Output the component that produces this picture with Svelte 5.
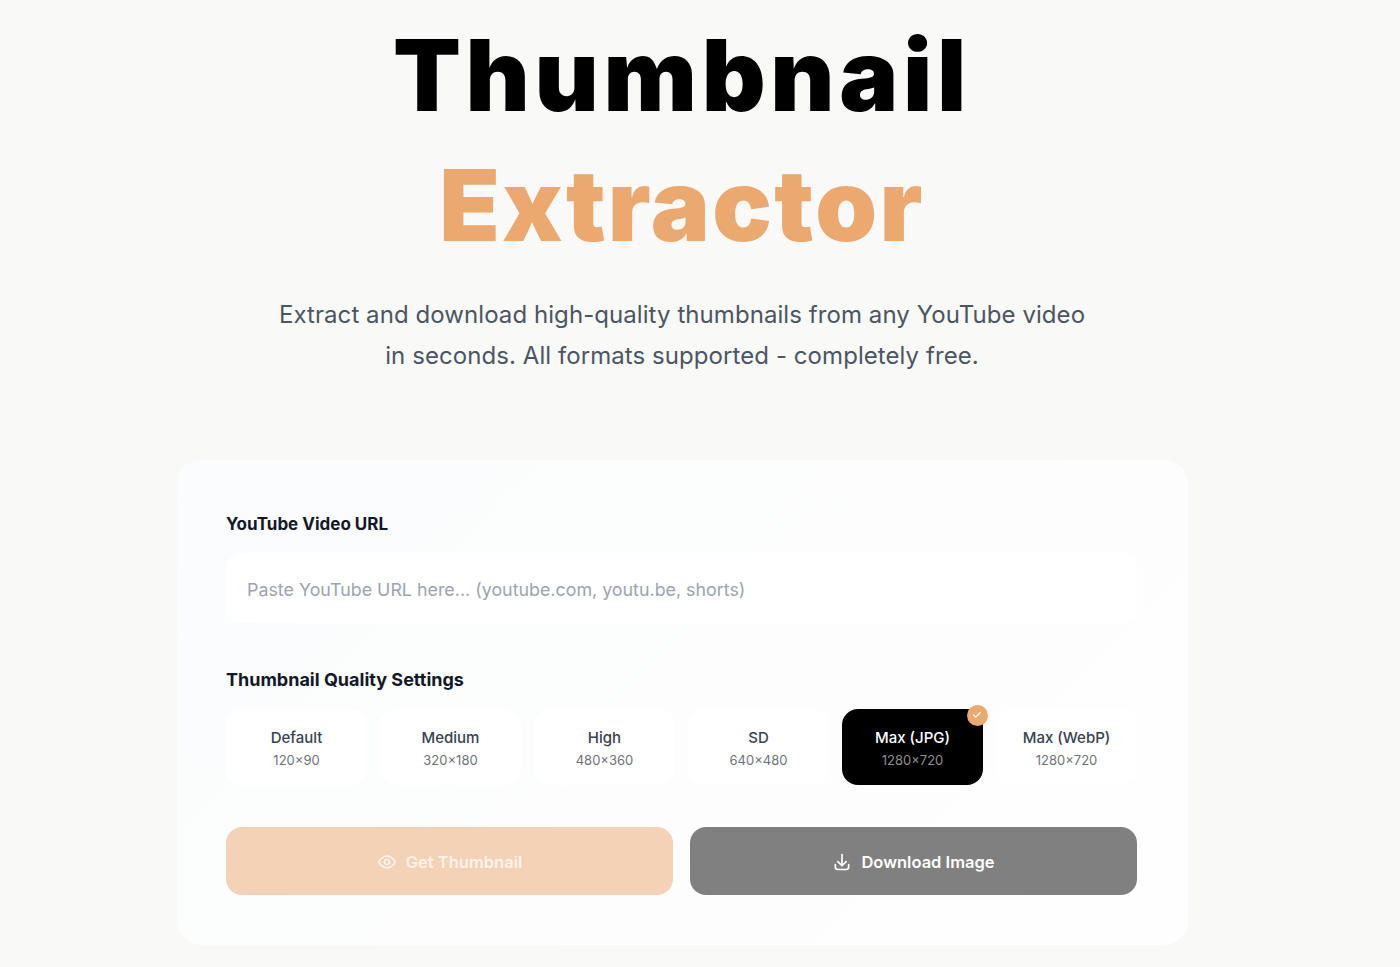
<script>
  const qualities = [
    { name: 'Default', size: '120×90' },
    { name: 'Medium', size: '320×180' },
    { name: 'High', size: '480×360' },
    { name: 'SD', size: '640×480' },
    { name: 'Max (JPG)', size: '1280×720', active: true },
    { name: 'Max (WebP)', size: '1280×720' }
  ];
</script>

<main class="page">
  <header class="hero">
    <h1>Thumbnail <span>Extractor</span></h1>
    <p>Extract and download high-quality thumbnails from any YouTube video<br />in seconds. All formats supported - completely free.</p>
  </header>

  <section class="card">
    <label class="label" for="url">YouTube Video URL</label>
    <input id="url" class="url" type="text" placeholder="Paste YouTube URL here... (youtube.com, youtu.be, shorts)" />

    <div class="label quality-label">Thumbnail Quality Settings</div>
    <div class="qualities">
      {#each qualities as q}
        <button class="quality" class:active={q.active}>
          <span class="name">{q.name}</span>
          <span class="size">{q.size}</span>
          {#if q.active}
            <span class="check">
              <svg width="10" height="10" viewBox="0 0 24 24" fill="none" stroke="currentColor" stroke-width="3" stroke-linecap="round" stroke-linejoin="round"><path d="M20 6L9 17l-5-5" /></svg>
            </span>
          {/if}
        </button>
      {/each}
    </div>

    <div class="actions">
      <button class="action get">
        <svg width="20" height="20" viewBox="0 0 24 24" fill="none" stroke="currentColor" stroke-width="2" stroke-linecap="round" stroke-linejoin="round"><path d="M2 12s3.6-7 10-7 10 7 10 7-3.6 7-10 7-10-7-10-7z" /><circle cx="12" cy="12" r="3" /></svg>
        Get Thumbnail
      </button>
      <button class="action download">
        <svg width="20" height="20" viewBox="0 0 24 24" fill="none" stroke="currentColor" stroke-width="2" stroke-linecap="round" stroke-linejoin="round"><path d="M4 15v3a3 3 0 0 0 3 3h10a3 3 0 0 0 3-3v-3" /><path d="M12 3v13" /><path d="M7 11.5l5 5 5-5" /></svg>
        Download Image
      </button>
    </div>
  </section>
</main>

<style>
  :global(body) {
    margin: 0;
    background: #f9f9f7;
    font-family: Inter, "Liberation Sans", sans-serif;
  }

  .page {
    width: 1365px;
    height: 967px;
    overflow: hidden;
  }

  .hero {
    padding-right: 1px;
    text-align: center;
  }

  h1 {
    margin: 0;
    padding-top: 10px;
    font-size: 99px;
    font-weight: 900;
    line-height: 130px;
    letter-spacing: 4.7px;
    color: #000;
  }

  h1 span {
    display: block;
    letter-spacing: 2.4px;
    color: #eba96f;
  }

  .hero p {
    margin: 24px 0 0;
    font-size: 24px;
    line-height: 41px;
    letter-spacing: 0.07px;
    color: #4b5563;
  }

  .card {
    box-sizing: border-box;
    width: 1011px;
    margin: 84px auto 0;
    padding: 50px 51px 50px 49px;
    border-radius: 24px;
    background: linear-gradient(135deg, #fbfcfd, #fefefe);
  }

  .label {
    display: block;
    font-size: 17px;
    font-weight: 700;
    line-height: 28px;
    color: #111827;
  }

  .url {
    display: block;
    box-sizing: border-box;
    width: 100%;
    height: 70px;
    margin-top: 15px;
    padding: 2px 21px 0;
    border: none;
    border-radius: 16px;
    background: #fff;
    font-family: inherit;
    font-size: 17.85px;
  }

  .url::placeholder {
    color: #9ca3af;
  }

  .quality-label {
    margin-top: 43px;
    font-size: 18px;
  }

  .qualities {
    display: grid;
    grid-template-columns: repeat(6, 1fr);
    gap: 13px;
    margin-top: 15px;
  }

  .quality {
    position: relative;
    display: flex;
    flex-direction: column;
    align-items: center;
    gap: 3px;
    height: 76px;
    padding: 19px 0 0;
    border: none;
    border-radius: 16px;
    background: #fff;
    font-family: inherit;
    color: #374151;
  }

  .name {
    font-size: 15px;
    font-weight: 500;
    line-height: 20px;
  }

  .size {
    font-size: 13px;
    line-height: 18px;
    color: #6f7279;
  }

  .quality.active {
    background: #000;
    color: #fff;
  }

  .quality.active .size {
    color: #8f8f8f;
  }

  .check {
    position: absolute;
    top: -4.5px;
    right: -4.5px;
    display: flex;
    align-items: center;
    justify-content: center;
    width: 21px;
    height: 21px;
    border-radius: 50%;
    background: #eba96f;
    color: #fff;
  }

  .actions {
    display: grid;
    grid-template-columns: 1fr 1fr;
    gap: 17px;
    margin-top: 42px;
  }

  .action {
    display: flex;
    align-items: center;
    justify-content: center;
    gap: 9px;
    height: 68px;
    padding: 1px 0 0;
    border: none;
    border-radius: 16px;
    font-family: inherit;
    font-size: 16.5px;
    font-weight: 600;
    color: #fff;
  }

  .get {
    background: #f3d2b6;
    color: #fdf3ea;
  }

  .download {
    background: #808080;
  }
</style>
